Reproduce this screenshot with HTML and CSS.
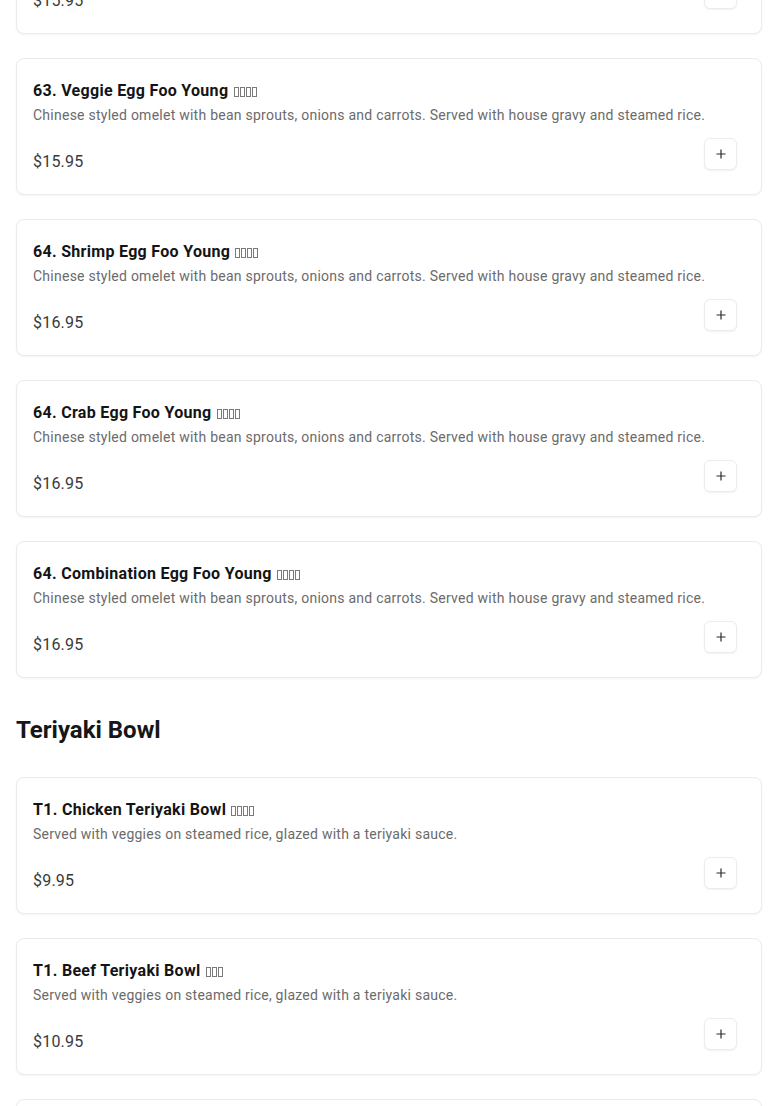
FILE: index.html
```html
<!DOCTYPE html>
<html lang="en">
<head>
<meta charset="utf-8">
<title>Menu</title>
<link rel="stylesheet" href="styles.css">
</head>
<body>
<main class="menu">
  <section class="section">
    <div class="cards">
      <article class="card">
        <h3 class="item-title">62. Chicken Egg Foo Young <span class="tofu"><i></i><i></i><i></i><i></i></span></h3>
        <p class="item-desc">Chinese styled omelet with bean sprouts, onions and carrots. Served with house gravy and steamed rice.</p>
        <div class="item-foot">
          <span class="price">$15.95</span>
          <button class="add" type="button" aria-label="Add"><svg width="10" height="10" viewBox="0 0 10 10"><path d="M5 0.5v9M0.5 5h9" stroke="#2b2b2b" stroke-width="1.2" fill="none"/></svg></button>
        </div>
      </article>
      <article class="card">
        <h3 class="item-title">63. Veggie Egg Foo Young <span class="tofu"><i></i><i></i><i></i><i></i></span></h3>
        <p class="item-desc">Chinese styled omelet with bean sprouts, onions and carrots. Served with house gravy and steamed rice.</p>
        <div class="item-foot">
          <span class="price">$15.95</span>
          <button class="add" type="button" aria-label="Add"><svg width="10" height="10" viewBox="0 0 10 10"><path d="M5 0.5v9M0.5 5h9" stroke="#2b2b2b" stroke-width="1.2" fill="none"/></svg></button>
        </div>
      </article>
      <article class="card">
        <h3 class="item-title">64. Shrimp Egg Foo Young <span class="tofu"><i></i><i></i><i></i><i></i></span></h3>
        <p class="item-desc">Chinese styled omelet with bean sprouts, onions and carrots. Served with house gravy and steamed rice.</p>
        <div class="item-foot">
          <span class="price">$16.95</span>
          <button class="add" type="button" aria-label="Add"><svg width="10" height="10" viewBox="0 0 10 10"><path d="M5 0.5v9M0.5 5h9" stroke="#2b2b2b" stroke-width="1.2" fill="none"/></svg></button>
        </div>
      </article>
      <article class="card">
        <h3 class="item-title">64. Crab Egg Foo Young <span class="tofu"><i></i><i></i><i></i><i></i></span></h3>
        <p class="item-desc">Chinese styled omelet with bean sprouts, onions and carrots. Served with house gravy and steamed rice.</p>
        <div class="item-foot">
          <span class="price">$16.95</span>
          <button class="add" type="button" aria-label="Add"><svg width="10" height="10" viewBox="0 0 10 10"><path d="M5 0.5v9M0.5 5h9" stroke="#2b2b2b" stroke-width="1.2" fill="none"/></svg></button>
        </div>
      </article>
      <article class="card">
        <h3 class="item-title">64. Combination Egg Foo Young <span class="tofu"><i></i><i></i><i></i><i></i></span></h3>
        <p class="item-desc">Chinese styled omelet with bean sprouts, onions and carrots. Served with house gravy and steamed rice.</p>
        <div class="item-foot">
          <span class="price">$16.95</span>
          <button class="add" type="button" aria-label="Add"><svg width="10" height="10" viewBox="0 0 10 10"><path d="M5 0.5v9M0.5 5h9" stroke="#2b2b2b" stroke-width="1.2" fill="none"/></svg></button>
        </div>
      </article>
    </div>
  </section>

  <section class="section">
    <h2 class="section-title">Teriyaki Bowl</h2>
    <div class="cards">
      <article class="card">
        <h3 class="item-title">T1. Chicken Teriyaki Bowl <span class="tofu"><i></i><i></i><i></i><i></i></span></h3>
        <p class="item-desc">Served with veggies on steamed rice, glazed with a teriyaki sauce.</p>
        <div class="item-foot">
          <span class="price">$9.95</span>
          <button class="add" type="button" aria-label="Add"><svg width="10" height="10" viewBox="0 0 10 10"><path d="M5 0.5v9M0.5 5h9" stroke="#2b2b2b" stroke-width="1.2" fill="none"/></svg></button>
        </div>
      </article>
      <article class="card">
        <h3 class="item-title">T1. Beef Teriyaki Bowl <span class="tofu"><i></i><i></i><i></i></span></h3>
        <p class="item-desc">Served with veggies on steamed rice, glazed with a teriyaki sauce.</p>
        <div class="item-foot">
          <span class="price">$10.95</span>
          <button class="add" type="button" aria-label="Add"><svg width="10" height="10" viewBox="0 0 10 10"><path d="M5 0.5v9M0.5 5h9" stroke="#2b2b2b" stroke-width="1.2" fill="none"/></svg></button>
        </div>
      </article>
      <article class="card">
        <h3 class="item-title">T2. Shrimp Teriyaki Bowl <span class="tofu"><i></i><i></i><i></i><i></i></span></h3>
        <p class="item-desc">Served with veggies on steamed rice, glazed with a teriyaki sauce.</p>
        <div class="item-foot">
          <span class="price">$11.95</span>
          <button class="add" type="button" aria-label="Add"><svg width="10" height="10" viewBox="0 0 10 10"><path d="M5 0.5v9M0.5 5h9" stroke="#2b2b2b" stroke-width="1.2" fill="none"/></svg></button>
        </div>
      </article>
    </div>
  </section>
</main>
</body>
</html>
```

FILE: styles.css
```css
* { box-sizing: border-box; }

html, body {
  margin: 0;
  padding: 0;
  background: #ffffff;
  overflow: hidden;
}

body {
  font-family: Roboto, "Noto Sans", Arial, sans-serif;
  color: #111111;
}

.menu {
  padding: 0 16px;
  margin-top: -103px;
}

.section + .section {
  margin-top: 36px;
}

.section-title {
  margin: 0 0 31px;
  font-size: 24px;
  line-height: 32px;
  font-weight: 700;
  color: #161616;
}

.cards {
  display: flex;
  flex-direction: column;
  gap: 24px;
}

.card {
  border: 1px solid #ebebeb;
  border-radius: 8px;
  background: #fff;
  padding: 20px 16px 16px;
  box-shadow: 0 1px 2px rgba(0, 0, 0, 0.05);
  height: 137px;
}

.item-title {
  margin: 0;
  font-size: 16px;
  line-height: 24px;
  font-weight: 700;
  color: #141414;
  letter-spacing: 0.3px;
}

.tofu {
  display: inline-flex;
  gap: 1px;
  margin-left: 1px;
  vertical-align: -1px;
}

.tofu i {
  display: block;
  width: 5px;
  height: 10px;
  border: 1px solid #7a7a7a;
}

.item-desc {
  margin: 2px 0 0;
  font-size: 14px;
  line-height: 20px;
  color: #6b6b6b;
  letter-spacing: 0.25px;
}

.item-foot {
  display: flex;
  justify-content: space-between;
  align-items: flex-start;
  margin-top: 13px;
}

.price {
  padding-top: 12px;
  font-size: 16px;
  line-height: 24px;
  color: #3a3a3a;
  letter-spacing: 0.2px;
}

.add {
  width: 33px;
  height: 32px;
  margin-right: 8px;
  padding: 0;
  display: flex;
  align-items: center;
  justify-content: center;
  background: #fff;
  border: 1px solid #ececec;
  border-radius: 6px;
  box-shadow: 0 1px 2px rgba(0, 0, 0, 0.06);
  cursor: pointer;
}
```
